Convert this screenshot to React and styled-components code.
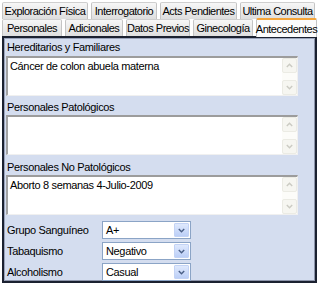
import React from "react";
import styled, { createGlobalStyle } from "styled-components";

const Global = createGlobalStyle`
  html, body { margin: 0; padding: 0; background: #ffffff; }
  body { font-family: "Liberation Sans", Arial, sans-serif; }
`;

const Page = styled.div`
  width: 320px;
  height: 285px;
  padding: 2px 0 0 2px;
  box-sizing: border-box;
  font-family: "Liberation Sans", Arial, sans-serif;
  font-size: 11px;
  color: #000;
  overflow: hidden;
`;

const TabRow = styled.div`
  display: flex;
  gap: 3px;
  height: 17px;
  align-items: flex-end;
`;

const Tab = styled.div`
  box-sizing: border-box;
  flex: none;
  width: ${(p) => p.$w}px;
  height: ${(p) => (p.$active ? "19px" : "17px")};
  margin-bottom: ${(p) => (p.$active ? "-1px" : "0")};
  display: flex;
  align-items: center;
  justify-content: center;
  white-space: nowrap;
  letter-spacing: -0.5px;
  background: ${(p) =>
    p.$active ? "#fbfbfc" : "linear-gradient(#f7f7f7, #e9e9e9 55%, #dedede)"};
  border: 1px solid #c4c4c4;
  border-bottom: none;
  border-top: ${(p) => (p.$active ? "2px solid #f5a53a" : "1px solid #cfcfcf")};
  border-radius: 2px 2px 0 0;
  position: relative;
  z-index: ${(p) => (p.$active ? 1 : 0)};
`;

const Panel = styled.div`
  box-sizing: border-box;
  width: 315px;
  height: 247px;
  background: #d4ddef;
  border: 2px solid #1b2130;
  box-shadow: inset 1px 1px 0 #9aa3ba, inset -1px -1px 0 #8d95ab;
  padding: 0 0 0 2px;
  display: flex;
  flex-direction: column;
  letter-spacing: -0.35px;
`;

const Label = styled.div`
  height: ${(p) => p.$h}px;
  margin-top: ${(p) => p.$mt}px;
  display: flex;
  align-items: center;
  padding-left: 1px;
`;

const Area = styled.div`
  box-sizing: border-box;
  width: 292px;
  height: 40px;
  margin-top: ${(p) => p.$mt || 0}px;
  background: #fff;
  border-top: 2px solid #9c9c9c;
  border-left: 2px solid #a3a3a3;
  border-right: 1px solid #f0f0f0;
  border-bottom: 1px solid #f0f0f0;
  display: flex;
`;

const AreaText = styled.div`
  flex: 1;
  padding: 1px 2px;
  line-height: 14px;
`;

const Scroll = styled.div`
  width: 15px;
  display: flex;
  flex-direction: column;
  justify-content: space-between;
  background: #fcfcf9;
`;

const ScrollBtn = styled.div`
  height: 15px;
  box-sizing: border-box;
  border: 1px solid #ebebe4;
  border-radius: 2px;
  background: #f6f6f1;
  display: flex;
  align-items: center;
  justify-content: center;
`;

const Fields = styled.div`
  margin-top: 6px;
  display: flex;
  flex-direction: column;
  gap: 3px;
`;

const FieldRow = styled.div`
  display: flex;
  align-items: center;
  height: 18px;
`;

const FieldLabel = styled.div`
  width: 95px;
  padding-left: 1px;
`;

const Select = styled.div`
  box-sizing: border-box;
  width: 89px;
  height: 18px;
  background: #fff;
  border: 1px solid #8ba4c6;
  display: flex;
  align-items: center;
  padding: 0 1px 0 3px;
`;

const SelectText = styled.div`
  flex: 1;
`;

const DropBtn = styled.div`
  box-sizing: border-box;
  width: 15px;
  height: 14px;
  background: linear-gradient(#dfe9fd, #bccff7);
  border: 1px solid #c3d3f5;
  border-radius: 1px;
  display: flex;
  align-items: center;
  justify-content: center;
`;

const Chev = ({ up, color = "#cbcbc3" }) => (
  <svg width="7" height="5" viewBox="0 0 7 5">
    <path
      d={up ? "M0.8 4 L3.5 1.2 L6.2 4" : "M0.8 1 L3.5 3.8 L6.2 1"}
      fill="none"
      stroke={color}
      strokeWidth="1.4"
    />
  </svg>
);

const TextArea = ({ text, mt }) => (
  <Area $mt={mt}>
    <AreaText>{text}</AreaText>
    <Scroll>
      <ScrollBtn>
        <Chev up />
      </ScrollBtn>
      <ScrollBtn>
        <Chev />
      </ScrollBtn>
    </Scroll>
  </Area>
);

const Field = ({ label, value }) => (
  <FieldRow>
    <FieldLabel>{label}</FieldLabel>
    <Select>
      <SelectText>{value}</SelectText>
      <DropBtn>
        <Chev color="#4a5f86" />
      </DropBtn>
    </Select>
  </FieldRow>
);

export default function App() {
  return (
    <Page>
      <Global />
      <TabRow>
        <Tab $w={86}>Exploración Física</Tab>
        <Tab $w={66}>Interrogatorio</Tab>
        <Tab $w={77}>Acts Pendientes</Tab>
        <Tab $w={75}>Ultima Consulta</Tab>
      </TabRow>
      <TabRow>
        <Tab $w={60}>Personales</Tab>
        <Tab $w={58}>Adicionales</Tab>
        <Tab $w={64}>Datos Previos</Tab>
        <Tab $w={60}>Ginecología</Tab>
        <Tab $w={61} $active>
          Antecedentes
        </Tab>
      </TabRow>
      <Panel>
        <Label $h={16} $mt={1}>Hereditarios y Familiares</Label>
        <TextArea text="Cáncer de colon abuela materna" mt={1} />
        <Label $h={16} $mt={3}>Personales Patológicos</Label>
        <TextArea text="" />
        <Label $h={16} $mt={4}>Personales No Patológicos</Label>
        <TextArea text="Aborto 8 semanas 4-Julio-2009" />
        <Fields>
          <Field label="Grupo Sanguíneo" value="A+" />
          <Field label="Tabaquismo" value="Negativo" />
          <Field label="Alcoholismo" value="Casual" />
        </Fields>
      </Panel>
    </Page>
  );
}
